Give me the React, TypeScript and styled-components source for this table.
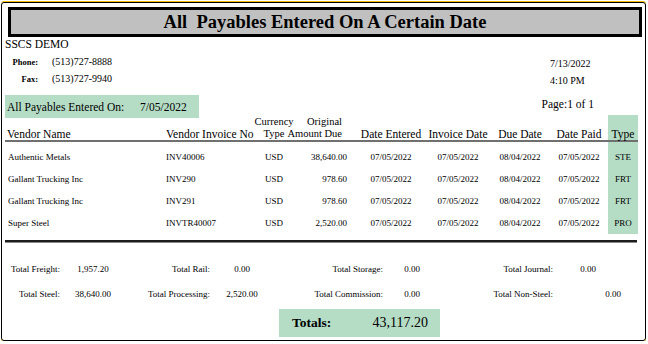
import React from 'react'
import styled, { createGlobalStyle } from 'styled-components'

const GREEN = '#b5dcc5'
const SERIF = '"Liberation Serif", "Times New Roman", "DejaVu Serif", serif'

const GlobalStyle = createGlobalStyle`
  html, body {
    margin: 0;
    padding: 0;
    background: #fff;
  }
  body {
    font-family: ${SERIF};
    color: #000;
  }
`

const Frame = styled.div`
  box-sizing: border-box;
  width: 645px;
  height: 339px;
  margin: 2px 0 0 1px;
  padding: 4px 7px 0 3px;
  border: 1px solid #000;
  border-radius: 3px;
  box-shadow: 0 -1px 0 #f2c200, 0 1px 0 #f2c200;
  overflow: hidden;
  font-family: ${SERIF};
`

const TitleBar = styled.div`
  box-sizing: border-box;
  height: 30px;
  margin: 0 -4px 0 3px;
  border: 3px solid #000;
  background: #c0c0c0;
  display: flex;
  align-items: center;
  justify-content: center;
  font-size: 18.5px;
  font-weight: bold;
  white-space: pre;
`

const Info = styled.div`
  height: 58px;
  display: flex;
  justify-content: space-between;
`

const Company = styled.div`
  font-size: 11.5px;
  line-height: 14px;
`

const Contacts = styled.div`
  display: grid;
  grid-template-columns: 33px auto;
  grid-auto-rows: 17px;
  column-gap: 14px;
  margin-top: 2px;
  align-items: center;
`

const ContactLabel = styled.span`
  font-size: 8.5px;
  font-weight: bold;
  text-align: right;
`

const ContactValue = styled.span`
  font-size: 10px;
`

const Stamps = styled.div`
  width: 88px;
  padding-top: 19px;
  font-size: 10px;
  line-height: 16px;
  display: flex;
  flex-direction: column;
  gap: 1px;
`

const SubHeader = styled.div`
  height: 23px;
  margin-bottom: -3px;
  display: flex;
  justify-content: space-between;
  align-items: flex-start;
`

const EnteredOn = styled.div`
  box-sizing: border-box;
  width: 194px;
  height: 23px;
  padding-left: 2px;
  background: ${GREEN};
  display: grid;
  grid-template-columns: 133px auto;
  align-items: center;
  font-size: 11.5px;
`

const PageNo = styled.div`
  margin: 2px 44px 0 0;
  font-size: 11.5px;
  line-height: 14px;
`

const COLUMNS = '161px 90px 36px 64px 70px 64px 60px 58px 30px'

const HeadRow = styled.div`
  display: grid;
  grid-template-columns: ${COLUMNS};
`

type Align = 'start' | 'center' | 'end'

const HeadCell = styled.div<{ $align?: Align; $inset?: number; $tint?: boolean; $stacked?: boolean }>`
  box-sizing: border-box;
  height: 27px;
  padding: 1px ${p => p.$inset ?? 0}px ${p => (p.$stacked ? 0 : 1.5)}px
    ${p => (p.$align === 'start' ? p.$inset ?? 0 : 0)}px;
  border-bottom: 2px solid #707070;
  background: ${p => (p.$tint ? GREEN : 'transparent')};
  display: flex;
  flex-direction: column;
  justify-content: flex-end;
  align-items: ${p => (p.$align === 'end' ? 'flex-end' : p.$align === 'start' ? 'flex-start' : 'center')};
  font-size: ${p => (p.$stacked ? 10.5 : 11.5)}px;
  line-height: ${p => (p.$stacked ? 12 : 9)}px;
  white-space: nowrap;
`

const DataRow = styled.div`
  display: grid;
  grid-template-columns: ${COLUMNS};
  height: 22px;

  &:first-child {
    height: 26px;
  }
  &:first-child > div {
    padding-top: 4px;
  }
`

const DataCell = styled.div<{ $align?: Align; $inset?: number; $tint?: boolean }>`
  box-sizing: border-box;
  display: flex;
  align-items: center;
  justify-content: ${p => (p.$align === 'end' ? 'flex-end' : p.$align === 'start' ? 'flex-start' : 'center')};
  padding-right: ${p => (p.$align === 'end' ? p.$inset ?? 0 : 0)}px;
  padding-left: ${p => (p.$align === 'start' ? p.$inset ?? 0 : 0)}px;
  background: ${p => (p.$tint ? GREEN : 'transparent')};
  font-size: 9px;
  white-space: nowrap;
`

const Rule = styled.div`
  width: 632px;
  height: 2px;
  margin-top: 6px;
  background: #1c1c1c;
  border-bottom: 1px solid #8a8a8a;
`

const TotalsGrid = styled.div`
  display: grid;
  grid-template-columns: 55px 66px 84px 64px 109px 58px 112px 70px;
  grid-auto-rows: 18px;
  row-gap: 7px;
  margin-top: 17px;
  align-items: center;
  font-size: 9px;
`

const TotalLabel = styled.span`
  text-align: right;
  white-space: nowrap;
`

const TotalValue = styled.span<{ $end?: boolean }>`
  text-align: ${p => (p.$end ? 'right' : 'center')};
  padding-right: ${p => (p.$end ? 2 : 0)}px;
`

const GrandTotal = styled.div`
  box-sizing: border-box;
  width: 161px;
  height: 28px;
  margin: 6px 0 0 274px;
  padding: 0 12px 0 13px;
  background: ${GREEN};
  display: flex;
  align-items: center;
  justify-content: space-between;
`

const GrandLabel = styled.span`
  font-size: 13.5px;
  font-weight: bold;
`

const GrandValue = styled.span`
  font-size: 14px;
`

const payables = [
  ['Authentic Metals', 'INV40006', 'USD', '38,640.00', '07/05/2022', '07/05/2022', '08/04/2022', '07/05/2022', 'STE'],
  ['Gallant Trucking Inc', 'INV290', 'USD', '978.60', '07/05/2022', '07/05/2022', '08/04/2022', '07/05/2022', 'FRT'],
  ['Gallant Trucking Inc', 'INV291', 'USD', '978.60', '07/05/2022', '07/05/2022', '08/04/2022', '07/05/2022', 'FRT'],
  ['Super Steel', 'INVTR40007', 'USD', '2,520.00', '07/05/2022', '07/05/2022', '08/04/2022', '07/05/2022', 'PRO'],
]

const totals: [string, string, boolean?][] = [
  ['Total Freight:', '1,957.20'],
  ['Total Rail:', '0.00'],
  ['Total Storage:', '0.00'],
  ['Total Journal:', '0.00'],
  ['Total Steel:', '38,640.00'],
  ['Total Processing:', '2,520.00'],
  ['Total Commission:', '0.00'],
  ['Total Non-Steel:', '0.00', true],
]

export default function App() {
  return (
    <>
      <GlobalStyle />
      <Frame>
        <TitleBar>All  Payables Entered On A Certain Date</TitleBar>

        <Info>
          <div>
            <Company>SSCS DEMO</Company>
            <Contacts>
              <ContactLabel>Phone:</ContactLabel>
              <ContactValue>(513)727-8888</ContactValue>
              <ContactLabel>Fax:</ContactLabel>
              <ContactValue>(513)727-9940</ContactValue>
            </Contacts>
          </div>
          <Stamps>
            <span>7/13/2022</span>
            <span>4:10 PM</span>
          </Stamps>
        </Info>

        <SubHeader>
          <EnteredOn>
            <span>All Payables Entered On:</span>
            <span>7/05/2022</span>
          </EnteredOn>
          <PageNo>Page:1 of 1</PageNo>
        </SubHeader>

        <HeadRow>
          <HeadCell $align="start" $inset={2}>Vendor Name</HeadCell>
          <HeadCell $align="start">Vendor Invoice No</HeadCell>
          <HeadCell $stacked>
            <span>Currency</span>
            <span>Type</span>
          </HeadCell>
          <HeadCell $stacked $align="end" $inset={14}>
            <span>Original</span>
            <span>Amount Due</span>
          </HeadCell>
          <HeadCell>Date Entered</HeadCell>
          <HeadCell>Invoice Date</HeadCell>
          <HeadCell>Due Date</HeadCell>
          <HeadCell>Date Paid</HeadCell>
          <HeadCell $tint>Type</HeadCell>
        </HeadRow>

        <div>
          {payables.map((row, i) => (
            <DataRow key={i}>
              <DataCell $align="start" $inset={3}>{row[0]}</DataCell>
              <DataCell $align="start">{row[1]}</DataCell>
              <DataCell>{row[2]}</DataCell>
              <DataCell $align="end" $inset={9}>{row[3]}</DataCell>
              <DataCell>{row[4]}</DataCell>
              <DataCell>{row[5]}</DataCell>
              <DataCell>{row[6]}</DataCell>
              <DataCell>{row[7]}</DataCell>
              <DataCell $tint>{row[8]}</DataCell>
            </DataRow>
          ))}
        </div>

        <Rule />

        <TotalsGrid>
          {totals.map(([label, value, end]) => (
            <React.Fragment key={label}>
              <TotalLabel>{label}</TotalLabel>
              <TotalValue $end={end}>{value}</TotalValue>
            </React.Fragment>
          ))}
        </TotalsGrid>

        <GrandTotal>
          <GrandLabel>Totals:</GrandLabel>
          <GrandValue>43,117.20</GrandValue>
        </GrandTotal>
      </Frame>
    </>
  )
}
